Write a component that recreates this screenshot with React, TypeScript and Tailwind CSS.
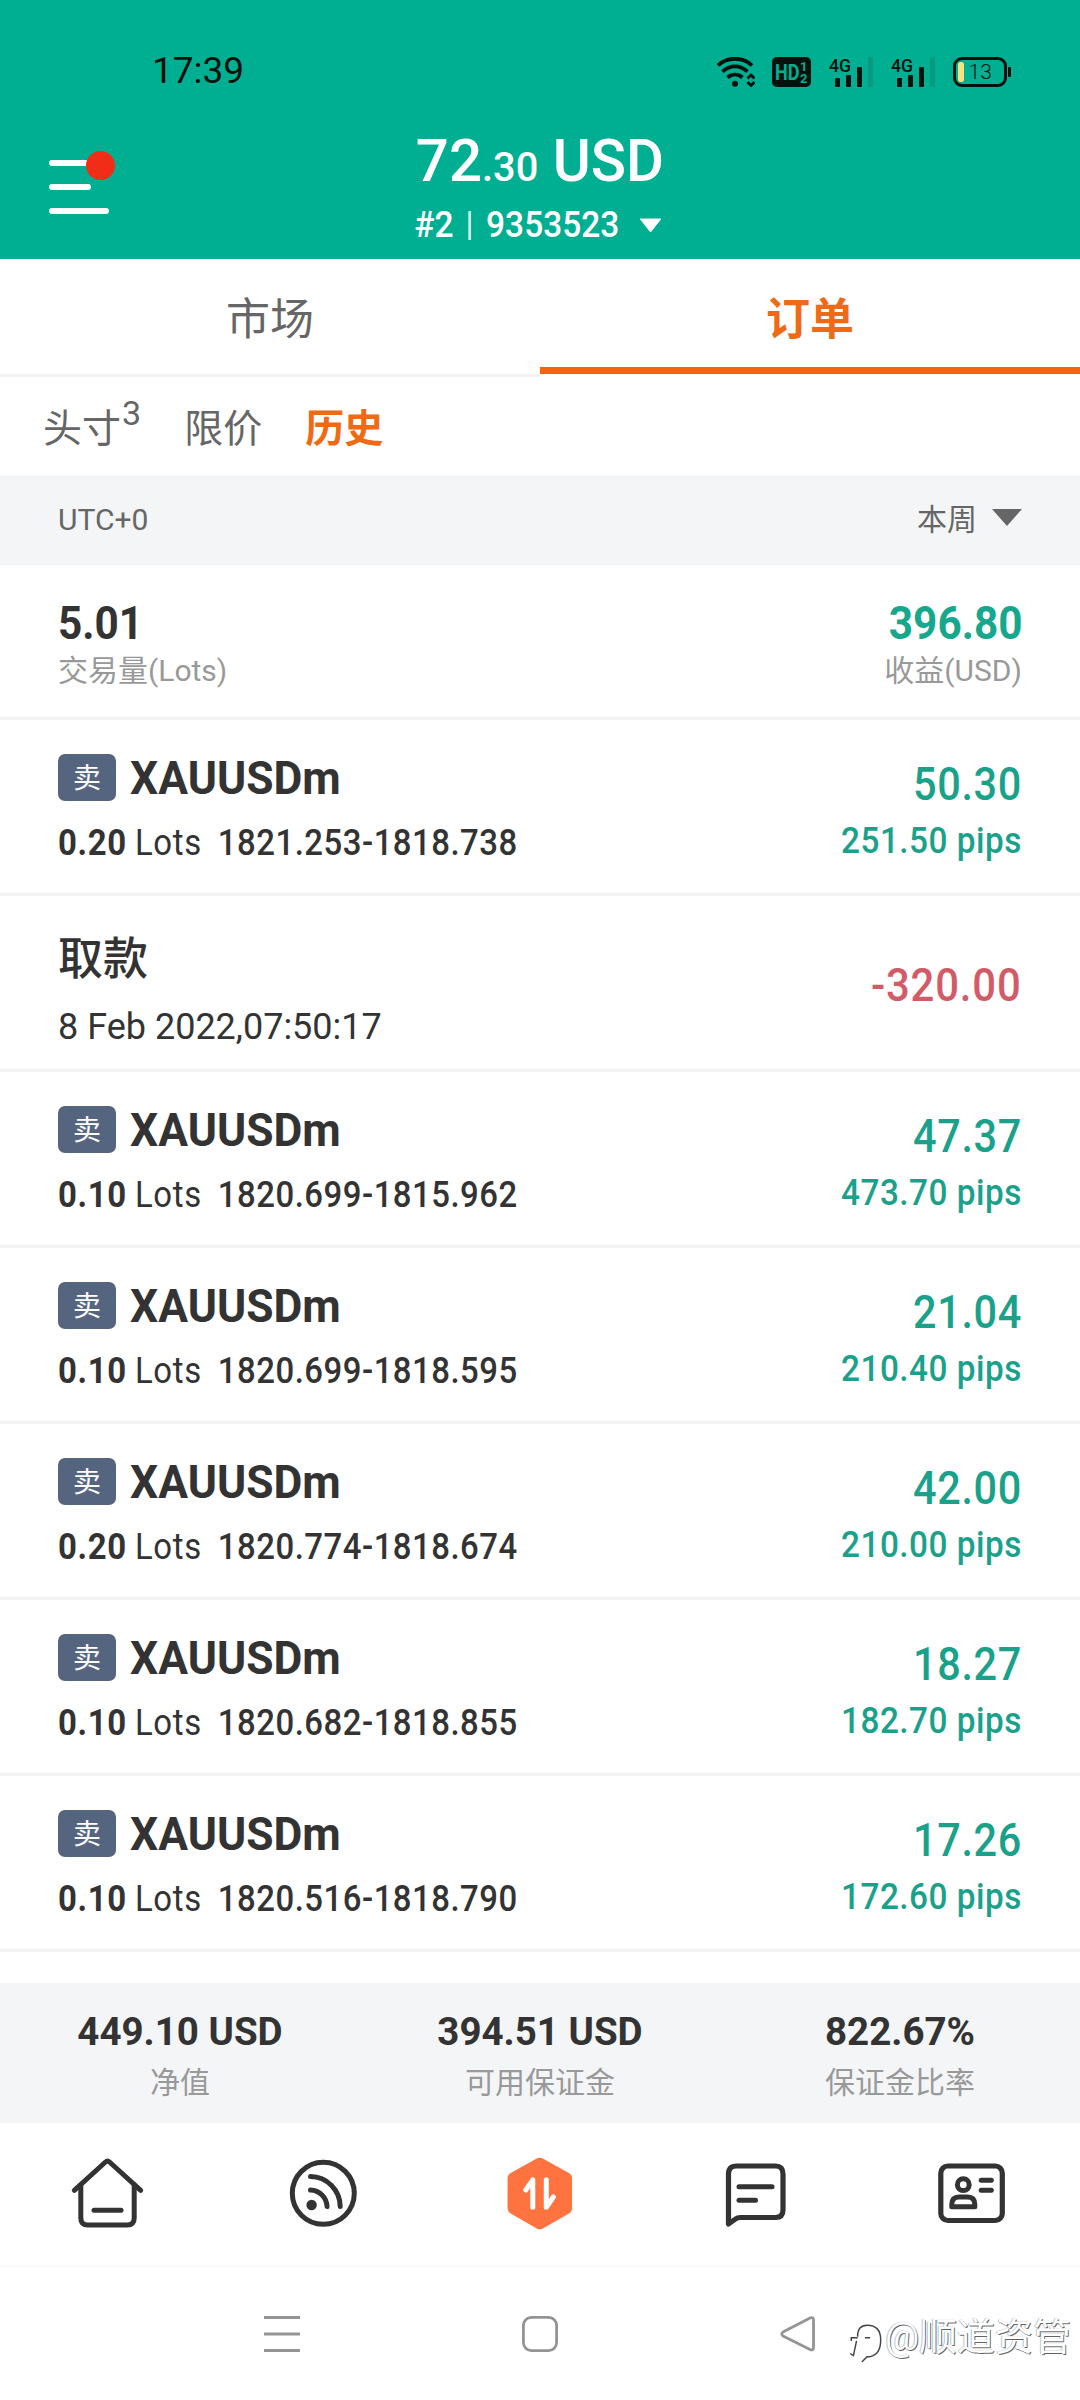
import type { ReactNode } from "react";

type Trade = {
  kind: "trade";
  lots: string;
  range: string;
  profit: string;
  pips: string;
};

type Withdrawal = {
  kind: "withdrawal";
  time: string;
  amount: string;
};

const HISTORY: (Trade | Withdrawal)[] = [
  { kind: "trade", lots: "0.20", range: "1821.253-1818.738", profit: "50.30", pips: "251.50" },
  { kind: "withdrawal", time: "8 Feb 2022,07:50:17", amount: "-320.00" },
  { kind: "trade", lots: "0.10", range: "1820.699-1815.962", profit: "47.37", pips: "473.70" },
  { kind: "trade", lots: "0.10", range: "1820.699-1818.595", profit: "21.04", pips: "210.40" },
  { kind: "trade", lots: "0.20", range: "1820.774-1818.674", profit: "42.00", pips: "210.00" },
  { kind: "trade", lots: "0.10", range: "1820.682-1818.855", profit: "18.27", pips: "182.70" },
  { kind: "trade", lots: "0.10", range: "1820.516-1818.790", profit: "17.26", pips: "172.60" },
];

const ACCOUNT = [
  { value: "449.10 USD", label: "净值" },
  { value: "394.51 USD", label: "可用保证金" },
  { value: "822.67%", label: "保证金比率" },
];

function Signal() {
  return (
    <svg className="shrink-0 overflow-visible" width="46" height="30" viewBox="0 0 46 30">
      <text x="0" y="14.5" fontSize="19" fontWeight="500" textLength="22" lengthAdjust="spacingAndGlyphs" fill="#04110d">
        4G
      </text>
      <rect x="6" y="21" width="5" height="9" rx="1" fill="#04110d" />
      <rect x="17" y="18" width="5" height="12" rx="1" fill="#04110d" />
      <rect x="28" y="10" width="5" height="20" rx="1" fill="#04110d" />
      <rect x="39" y="0" width="5" height="30" rx="1" fill="#0a9a80" />
    </svg>
  );
}

function StatusBar() {
  return (
    <div className="flex h-[143px] items-start justify-between pl-[152px] pr-[69px] text-[#04110d]">
      <span className="mt-[51px] text-[37px] leading-10">17:39</span>
      <div className="mt-[57px] flex">
        {/* wifi */}
        <svg className="mr-[17px]" width="38" height="30" viewBox="0 0 38 30" fill="none" stroke="#04110d" strokeWidth="3.8">
          <path d="M1 8.5 C10 -0.5 26 -0.5 35 8.5" />
          <path d="M5.5 14.7 C13 7.7 23 7.7 30.5 14.7" />
          <path d="M10.5 20.5 C15 16.7 21 16.7 25.5 20.5" />
          <circle cx="18" cy="26.8" r="3" fill="#04110d" stroke="none" />
          <path d="M30.5 21.5 L34 18 L37.5 21.5" strokeWidth="2.8" />
          <path d="M30.5 25 L34 28.5 L37.5 25" strokeWidth="2.8" />
        </svg>
        {/* HD 1/2 */}
        <svg className="mr-[18px]" width="39" height="30" viewBox="0 0 39 30" fill="#00af91">
          <rect width="39" height="30" rx="5" fill="#04110d" />
          <text x="3" y="23" fontSize="22" fontWeight="700" textLength="24.5" lengthAdjust="spacingAndGlyphs">HD</text>
          <text x="28" y="13.5" fontSize="13" fontWeight="700">1</text>
          <text x="28" y="25.5" fontSize="13" fontWeight="700">2</text>
        </svg>
        <div className="mr-4 flex gap-4">
          <Signal />
          <Signal />
        </div>
        <svg width="58" height="30" viewBox="0 0 58 30">
          <rect x="1.5" y="1.5" width="51" height="27" rx="7.5" fill="none" stroke="#04110d" strokeWidth="3" />
          <rect x="55" y="10" width="3" height="10" rx="1" fill="#04110d" />
          <rect x="5" y="5" width="6" height="20" rx="2.5" fill="#f6e380" />
          <text x="15.5" y="22.3" fontSize="21" fontWeight="300" fill="#04110d">13</text>
        </svg>
      </div>
    </div>
  );
}

function Header() {
  return (
    <header className="h-[259px] bg-[#00af91]">
      <StatusBar />
      <div className="flex h-[116px] px-12">
        <svg className="mt-[7px] shrink-0" width="68" height="68" viewBox="0 0 68 68">
          <g stroke="#fff" strokeWidth="6" strokeLinecap="round">
            <path d="M4 13 H44" />
            <path d="M4 37 H40" />
            <path d="M4 61 H58" />
          </g>
          <circle cx="52.5" cy="15.5" r="14.5" fill="#f12d18" />
        </svg>
        <div className="-mt-[15px] flex flex-1 flex-col items-center pr-[68px] text-white">
          <div className="scale-x-[0.97] text-[60px] leading-[65px] font-medium">
            72<span className="text-[41px]">.30</span> USD
          </div>
          <div className="mt-[5px] mr-1 flex h-10 scale-x-[0.93] items-center text-[36px] leading-10 font-medium">
            #2
            <span className="mx-4 h-[29px] w-[3px] bg-white/80" />
            9353523
            <svg className="ml-[22px]" width="24" height="15" viewBox="0 0 24 15">
              <path d="M1 1 H23 L12 14 Z" fill="#fff" stroke="#fff" strokeLinejoin="round" />
            </svg>
          </div>
        </div>
      </div>
    </header>
  );
}

function Tabs() {
  return (
    <>
      <nav className="flex h-[118px] text-[44px] leading-[122px]">
        <div className="flex-1 border-b-[3px] border-[#f2f2f2] text-center text-[#666]">市场</div>
        <div className="mb-[3px] flex-1 border-b-[7px] border-[#f5640c] text-center font-bold text-[#f06a15]">订单</div>
      </nav>
      <div className="flex h-[98px] pl-[43px] text-[39px] leading-[104px] text-[#666]">
        <span>头寸</span>
        <span className="ml-px text-[34px] leading-[72px]">3</span>
        <span className="ml-[43px]">限价</span>
        <span className="ml-[43px] font-bold text-[#f06a15]">历史</span>
      </div>
      <div className="flex h-[90px] items-center justify-between border-b border-[#f1f1f1] bg-[#f4f5f7] px-[58px] text-[30px] leading-10 text-[#666]">
        <span>UTC+0</span>
        <span className="flex items-center">
          本周
          <svg className="-mt-1 ml-[15px]" width="30" height="17" viewBox="0 0 30 17">
            <path d="M0 0 H30 L15 17 Z" fill="#666" />
          </svg>
        </span>
      </div>
    </>
  );
}

function Summary() {
  return (
    <section className="flex h-[155px] justify-between border-b-[3px] border-[#f2f2f2] px-[58px] pt-[34px]">
      <div>
        <div className="origin-left scale-x-90 text-[47px] leading-[48px] font-bold text-[#333]">5.01</div>
        <div className="mt-1 text-[30px] leading-10 text-[#999]">交易量(Lots)</div>
      </div>
      <div className="text-right">
        <div className="origin-right scale-x-90 text-[47px] leading-[48px] font-bold text-[#16a88c]">396.80</div>
        <div className="mt-1 text-[30px] leading-10 text-[#999]">收益(USD)</div>
      </div>
    </section>
  );
}

function Row({ children }: { children: ReactNode }) {
  return (
    <li className="flex h-44 justify-between border-b-[3px] border-[#f2f2f2] px-[58px] text-[#333]">{children}</li>
  );
}

function TradeRow({ trade }: { trade: Trade }) {
  return (
    <Row>
      <div className="pt-[34px]">
        <div className="flex h-[47px]">
          <span className="w-[58px] rounded-[7px] bg-[#56657f] text-center text-[28px] leading-[49px] text-white">卖</span>
          <span className="ml-3.5 origin-left scale-x-[0.965] text-[46px] leading-[48px] font-bold">XAUUSDm</span>
        </div>
        <div className="mt-[21px] flex origin-left scale-x-[0.89] text-[37px] leading-[42px] font-medium tracking-[0.02em]">
          <span className="font-bold">{trade.lots}</span>
          <span className="ml-[9px] font-normal">Lots</span>
          <span className="ml-[18px] tracking-[0.015em]">{trade.range}</span>
        </div>
      </div>
      <div className="pt-10 text-right font-medium text-[#1aa18a]">
        <div className="origin-right scale-x-90 text-[46px] leading-[48px] tracking-[0.015em]">{trade.profit}</div>
        <div className="mt-3 origin-right scale-x-[0.9] text-[37px] leading-[42px] tracking-[0.015em]">
          {trade.pips} pips
        </div>
      </div>
    </Row>
  );
}

function WithdrawalRow({ item }: { item: Withdrawal }) {
  return (
    <Row>
      <div className="pt-10">
        <div className="text-[45px] leading-[48px] font-medium">取款</div>
        <div className="mt-[22px] text-[36px] leading-[42px]">{item.time}</div>
      </div>
      <div className="origin-right scale-x-[0.91] pt-[65px] text-[46px] leading-[48px] font-medium tracking-[0.02em] text-[#d15b67]">
        {item.amount}
      </div>
    </Row>
  );
}

function NavIcon({ children }: { children: ReactNode }) {
  return (
    <div className="flex flex-1 justify-center pt-[30px]">
      <svg
        width="80"
        height="80"
        viewBox="0 0 80 80"
        fill="none"
        stroke="#333"
        strokeWidth="5"
        strokeLinecap="round"
        strokeLinejoin="round"
      >
        {children}
      </svg>
    </div>
  );
}

function BottomNav() {
  return (
    <nav className="flex h-36 border-b-2 border-[#fafafa]">
      <NavIcon>
        <path d="M6.3 37.3 L37.5 9 Q39.5 7.2 41.5 9 L72.7 37.3" />
        <path d="M12.8 32 V65 Q12.8 72 19.8 72 H59.2 Q66.2 72 66.2 65 V32" />
        <path d="M26 57.3 H53" />
      </NavIcon>
      <NavIcon>
        <circle cx="39.3" cy="40.3" r="31" />
        <circle cx="27.6" cy="52" r="5.2" fill="#333" stroke="none" />
        <path d="M26.5 37 A17 17 0 0 1 43 53.5" />
        <path d="M26.5 23.5 A30 30 0 0 1 56.2 53.5" />
      </NavIcon>
      <NavIcon>
        <path
          d="M39.8 11 L65.8 25.5 V55 L39.8 70 L13.8 55 V25.5 Z"
          fill="#ff7340"
          stroke="#ff7340"
          strokeWidth="12.5"
        />
        <path d="M32.8 54.3 V26.8 L25.8 37" stroke="#fff" />
        <path d="M46.3 26.8 V54.3 L53.3 44" stroke="#fff" />
      </NavIcon>
      <NavIcon>
        <path
          d="M12.5 71 V21 Q12.5 13 20.5 13 H59.5 Q67 13 67 21 V57 Q67 64.5 59.5 64.5 H24 Q21.5 64.5 19.5 66 Z"
          strokeWidth="5.2"
        />
        <path d="M23 33.7 H56" />
        <path d="M23 47.3 H39.5" />
      </NavIcon>
      <NavIcon>
        <rect x="8.8" y="13" width="61.5" height="54.5" rx="7" strokeWidth="5.2" />
        <circle cx="31.3" cy="31.7" r="5.9" />
        <path d="M19.8 53.8 V51.5 Q19.8 44 27 44 H35.6 Q42.8 44 42.8 51.5 V53.8 Z" />
        <path d="M49.2 27.3 H59.3" />
        <path d="M49.2 37.2 H59.3" />
      </NavIcon>
    </nav>
  );
}

function SystemNav() {
  return (
    <div className="relative flex h-[133px] justify-center gap-[218px] pt-[46px]">
      <svg width="40" height="42" viewBox="0 0 40 42" stroke="#949494" strokeWidth="3">
        <path d="M2 4.5 H38 M2 21 H38 M2 37.5 H38" />
      </svg>
      <svg width="40" height="42" viewBox="0 0 40 42" fill="none" stroke="#949494" strokeWidth="2.8">
        <rect x="3.4" y="4.4" width="33.2" height="33.2" rx="8" />
      </svg>
      <svg width="40" height="42" viewBox="0 0 40 42" fill="none" stroke="#949494" strokeWidth="2.8" strokeLinejoin="round">
        <path d="M5 19 L32 5 Q35.5 3.5 35.5 7 V34.5 Q35.5 38 32 36.5 L5 23 Q2.5 21 5 19 Z" />
      </svg>
      <div className="absolute top-[43px] right-[9px] flex items-center text-[38px] leading-[46px] text-white [text-shadow:1px_1px_0_#0009,-0.5px_-0.5px_1px_#0006]">
        <svg className="mt-3 mr-0.5" width="34" height="42" viewBox="0 0 32 40" fill="none" stroke="#444" strokeWidth="1.4">
          <path d="M8 14 Q8 3 17 3 Q30 3 30 17 Q30 31 20 33 L17 33 L12 38" />
          <path d="M2 18 V15 H8 M7 18 L4 32 L1 30" />
          <path d="M15 15 H20" />
        </svg>
        @顺道资管
      </div>
    </div>
  );
}

export default function App() {
  return (
    <div className="flex h-[2400px] w-[1080px] flex-col overflow-hidden bg-white font-[Roboto,'Noto_Sans_CJK_SC',sans-serif]">
      <Header />
      <Tabs />
      <Summary />
      <ul>
        {HISTORY.map((item, idx) =>
          item.kind === "trade" ? <TradeRow key={idx} trade={item} /> : <WithdrawalRow key={idx} item={item} />
        )}
      </ul>
      <section className="mt-[31px] flex h-[140px] bg-[#f4f5f7] pt-[27px] text-center">
        {ACCOUNT.map((item) => (
          <div key={item.label} className="flex-1">
            <div className="text-[38.5px] leading-[44px] font-bold text-[#333]">{item.value}</div>
            <div className="mt-[9px] text-[30px] leading-10 text-[#999]">{item.label}</div>
          </div>
        ))}
      </section>
      <BottomNav />
      <SystemNav />
    </div>
  );
}
